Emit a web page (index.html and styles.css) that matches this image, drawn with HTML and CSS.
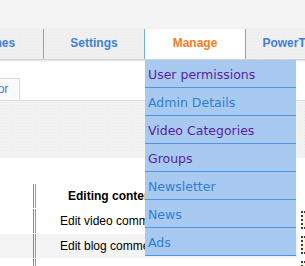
FILE: index.html
```
<!DOCTYPE html>
<html>
<head>
<meta charset="utf-8">
<link rel="stylesheet" href="styles.css">
</head>
<body>
<div class="top"></div>
<div class="nav">
  <div class="tab">Themes</div>
  <div class="tab">Settings</div>
  <div class="tab active">Manage
    <ul class="menu">
      <li class="visited">User permissions</li>
      <li>Admin Details</li>
      <li class="visited">Video Categories</li>
      <li class="visited">Groups</li>
      <li>Newsletter</li>
      <li>News</li>
      <li>Ads</li>
    </ul>
  </div>
  <div class="tab">PowerTools</div>
</div>
<div class="nav-shadow"></div>
<div class="subtabs">
  <div class="subtab">Editor</div>
</div>
<div class="toolbar"></div>
<div class="content">
  <div class="row head">
    <div class="c1"></div>
    <div class="c2"><span class="h">Editing content permissions</span></div>
    <div class="c3"></div>
  </div>
  <div class="row">
    <div class="c1"></div>
    <div class="c2"><span class="t">Edit video comments</span></div>
    <div class="c3"><span class="box"></span></div>
  </div>
  <div class="row alt">
    <div class="c1"></div>
    <div class="c2"><span class="t">Edit blog comments</span></div>
    <div class="c3"><span class="box"></span></div>
  </div>
  <div class="row">
    <div class="c1"></div>
    <div class="c2"><span class="t">Edit news</span></div>
    <div class="c3"><span class="box"></span></div>
  </div>
</div>
</body>
</html>
```
FILE: styles.css
```
html, body {
  margin: 0;
  padding: 0;
  background: #fff;
  overflow: hidden;
}
body {
  width: 305px;
  height: 266px;
  font-family: "Liberation Sans", Arial, sans-serif;
}
.top {
  height: 28px;
  background: #f4f4f4;
}
.nav {
  height: 31px;
  display: flex;
  margin-left: -58px;
  background: #f0f0f0;
  background-image: radial-gradient(#e9e9e9 0.6px, transparent 0.8px);
  background-size: 3px 3px;
}
.tab {
  flex: 0 0 100px;
  border-left: 1px solid #74aaea;
  height: 30px;
  margin-top: 1px;
  line-height: 29px;
  text-align: center;
  font-weight: bold;
  font-size: 12px;
  color: #3f80d6;
  white-space: nowrap;
  position: relative;
}
.tab:first-child {
  border-left: none;
  flex-basis: 101px;
}
.tab.active {
  background: #fff;
  color: #ff7a1e;
}
.nav-shadow {
  height: 3px;
  background: linear-gradient(#c9c9c9, #ececec 60%, #fff);
}
.menu {
  position: absolute;
  top: 31px;
  left: 0;
  width: 151px;
  margin: 0;
  padding: 0;
  list-style: none;
  background: #a8c9f0;
  text-align: left;
  z-index: 5;
}
.menu li {
  height: 24px;
  padding: 3px 0 0 3px;
  border-bottom: 1px solid #4f95de;
  line-height: 24px;
  font-family: "DejaVu Sans", Verdana, sans-serif;
  font-weight: normal;
  font-size: 12.5px;
  color: #2f7fd0;
}
.menu li.visited {
  color: #5a1e9c;
}
.subtabs {
  height: 38px;
  display: flex;
  align-items: flex-end;
  border-bottom: 1px solid #dcdcdc;
}
.subtab {
  margin-left: -35px;
  height: 21px;
  padding: 0 11px;
  border: 1px solid #dcdcdc;
  border-bottom: none;
  background: #fafafa;
  font-size: 12px;
  line-height: 21px;
  color: #3f80d6;
}
.toolbar {
  height: 57px;
  background: #f2f2f2;
  background-image: radial-gradient(#ebebeb 0.6px, transparent 0.8px);
  background-size: 3px 3px;
}
.content {
  padding-top: 26px;
}
.row {
  display: flex;
  height: 24px;
  margin-bottom: 1px;
  font-size: 12px;
  color: #000;
}
.row.alt {
  background: #f4f4f4;
}
.c1 {
  width: 33px;
  border-right: 1px solid #8a8a8a;
  margin-right: 1px;
}
.c2 {
  flex: 0 0 262px;
  border-left: 1px solid #9a9a9a;
  line-height: 24px;
  white-space: nowrap;
  overflow: hidden;
}
.h {
  font-weight: bold;
  padding-left: 32px;
  line-height: 22px;
}
.t {
  padding-left: 24px;
}
.c3 {
  flex: 1;
  position: relative;
  background: #fff;
}
.box {
  position: absolute;
  left: 3px;
  top: 2px;
  width: 13px;
  height: 14px;
  border: 2px dotted #3a3a4a;
  background: #fff6c8;
}
```
